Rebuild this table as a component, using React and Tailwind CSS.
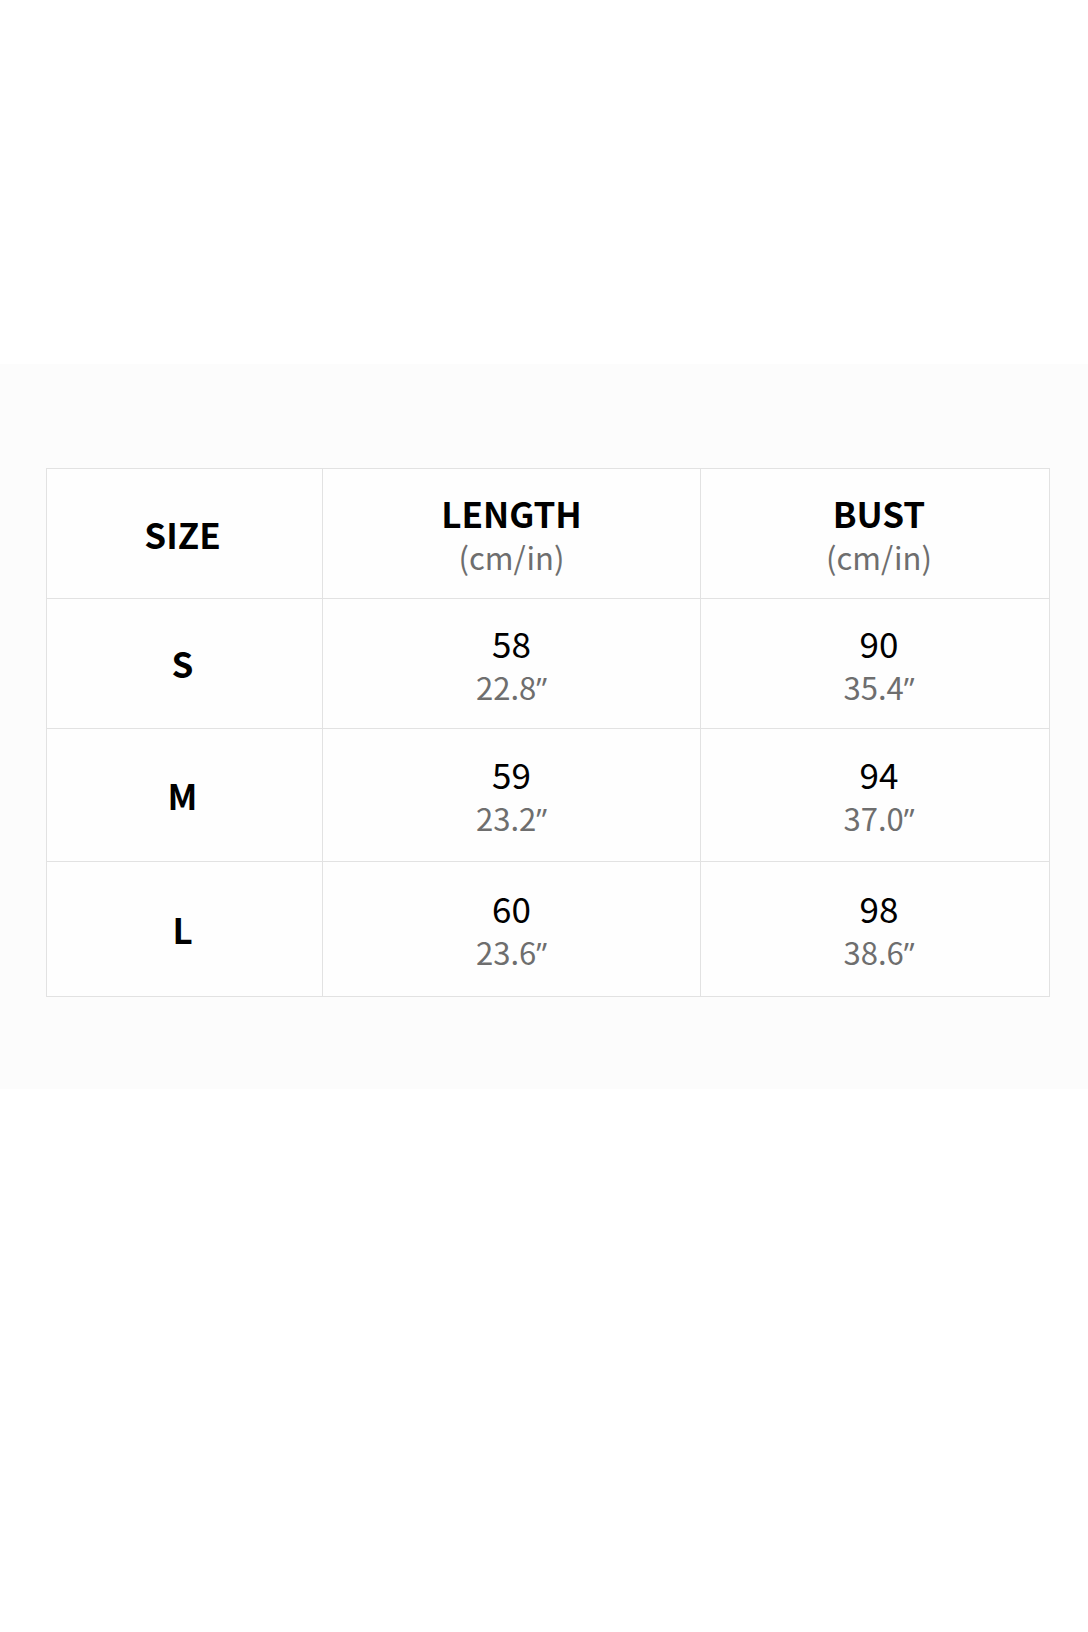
import React from "react";

const rows = [
  { size: "S", len: "58", lenIn: "22.8", bust: "90", bustIn: "35.4", h: "h-[130px]" },
  { size: "M", len: "59", lenIn: "23.2", bust: "94", bustIn: "37.0", h: "h-[133px]" },
  { size: "L", len: "60", lenIn: "23.6", bust: "98", bustIn: "38.6", h: "h-[134px]" },
];

function Inch({ v }) {
  return (
    <>
      {v}
      <span style={{ fontFamily: '"Open Sans", "Noto Sans", sans-serif' }}>”</span>
    </>
  );
}

function Two({ top, bottom, bold }) {
  return (
    <div className="flex flex-col items-center">
      <span className={`text-[35px] leading-[44px] text-black ${bold ? "font-bold" : ""}`}>{top}</span>
      <span className="text-[31px] leading-[44px] text-[#6e6e6e]">{bottom}</span>
    </div>
  );
}

export default function App() {
  return (
    <div className="w-[1088px] h-[1632px] bg-white pt-[364px]" style={{ fontFamily: '"Noto Sans CJK SC", "Noto Sans", sans-serif' }}>
      <div className="h-[725px] bg-[#fcfcfc] pt-[104px] pl-[46px]">
        <div className="w-[1004px] border border-[#e2e2e2] bg-[#fefefe]">
          <div className="grid grid-cols-[276px_378px_1fr] h-[130px] border-b border-[#e2e2e2]">
            <div className="flex items-center justify-center border-r border-[#e2e2e2] pt-[2px] pr-[4px]">
              <span className="text-[35px] font-bold text-black">SIZE</span>
            </div>
            <div className="flex items-center justify-center border-r border-[#e2e2e2] pt-[3px]">
              <Two top="LENGTH" bottom="(cm/in)" bold />
            </div>
            <div className="flex items-center justify-center pt-[3px] pl-[8px]">
              <Two top="BUST" bottom="(cm/in)" bold />
            </div>
          </div>
          {rows.map((r, i) => (
            <div key={r.size} className={`grid grid-cols-[276px_378px_1fr] ${r.h} ${i < rows.length - 1 ? "border-b border-[#e2e2e2]" : ""}`}>
              <div className="flex items-center justify-center border-r border-[#e2e2e2] pr-[4px]">
                <span className="text-[35px] font-bold text-black">{r.size}</span>
              </div>
              <div className="flex items-center justify-center border-r border-[#e2e2e2] pt-[3px]">
                <Two top={r.len} bottom={<Inch v={r.lenIn} />} />
              </div>
              <div className="flex items-center justify-center pt-[3px] pl-[8px]">
                <Two top={r.bust} bottom={<Inch v={r.bustIn} />} />
              </div>
            </div>
          ))}
        </div>
      </div>
    </div>
  );
}
